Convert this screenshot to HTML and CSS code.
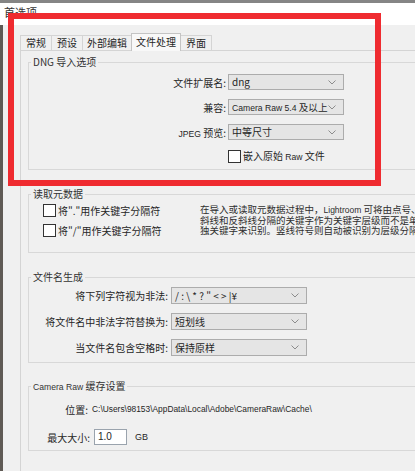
FILE: index.html
```html
<!DOCTYPE html>
<html lang="zh-CN">
<head>
<meta charset="utf-8">
<title>首选项</title>
<link rel="stylesheet" href="styles.css">
</head>
<body>
<div class="screen">
  <div class="titlebar">首选项</div>
  <div class="main">
    <div class="tabs">
      <div class="tab">常规</div>
      <div class="tab">预设</div>
      <div class="tab wide">外部编辑</div>
      <div class="tab wide active">文件处理</div>
      <div class="tab">界面</div>
    </div>
    <div class="panel">
      <fieldset class="group group-dng">
        <legend>DNG 导入选项</legend>
        <div class="frow">
          <span class="flabel">文件扩展名:</span>
          <div class="select">dng<svg class="chev" width="8" height="5" viewBox="0 0 8 5"><path d="M0.5 0.5 L4 4 L7.5 0.5" fill="none" stroke="#8c8c8c" stroke-width="1"/></svg></div>
        </div>
        <div class="frow">
          <span class="flabel">兼容:</span>
          <div class="select"><span class="latin">Camera Raw 5.4</span> <span class="cjk-sm">及以上</span><svg class="chev" width="8" height="5" viewBox="0 0 8 5"><path d="M0.5 0.5 L4 4 L7.5 0.5" fill="none" stroke="#8c8c8c" stroke-width="1"/></svg></div>
        </div>
        <div class="frow">
          <span class="flabel"><span class="latin">JPEG</span> 预览:</span>
          <div class="select">中等尺寸<svg class="chev" width="8" height="5" viewBox="0 0 8 5"><path d="M0.5 0.5 L4 4 L7.5 0.5" fill="none" stroke="#8c8c8c" stroke-width="1"/></svg></div>
        </div>
        <div class="frow frow-cb">
          <span></span>
          <label class="cb"><span class="box"></span><span>嵌入原始 <span class="latin">Raw</span> 文件</span></label>
        </div>
      </fieldset>

      <fieldset class="group group-meta">
        <legend>读取元数据</legend>
        <div class="meta">
          <div class="meta-left">
            <label class="cb"><span class="box"></span><span>将"."用作关键字分隔符</span></label>
            <label class="cb"><span class="box"></span><span>将"/"用作关键字分隔符</span></label>
          </div>
          <p class="meta-note">在导入或读取元数据过程中，<span class="latin">Lightroom</span> 可将由点号、<br>斜线和反斜线分隔的关键字作为关键字层级而不是单<br>独关键字来识别。竖线符号则自动被识别为层级分隔符。</p>
        </div>
      </fieldset>

      <fieldset class="group group-names">
        <legend>文件名生成</legend>
        <div class="nrow">
          <span class="flabel">将下列字符视为非法:</span>
          <div class="select">/ : \ * ? &quot; &lt; &gt; |¥<svg class="chev" width="8" height="5" viewBox="0 0 8 5"><path d="M0.5 0.5 L4 4 L7.5 0.5" fill="none" stroke="#8c8c8c" stroke-width="1"/></svg></div>
        </div>
        <div class="nrow">
          <span class="flabel">将文件名中非法字符替换为:</span>
          <div class="select">短划线<svg class="chev" width="8" height="5" viewBox="0 0 8 5"><path d="M0.5 0.5 L4 4 L7.5 0.5" fill="none" stroke="#8c8c8c" stroke-width="1"/></svg></div>
        </div>
        <div class="nrow">
          <span class="flabel">当文件名包含空格时:</span>
          <div class="select">保持原样<svg class="chev" width="8" height="5" viewBox="0 0 8 5"><path d="M0.5 0.5 L4 4 L7.5 0.5" fill="none" stroke="#8c8c8c" stroke-width="1"/></svg></div>
        </div>
      </fieldset>

      <fieldset class="group group-cache">
        <legend><span class="latin">Camera Raw</span> 缓存设置</legend>
        <div class="crow crow-loc">
          <span class="flabel">位置:</span>
          <span class="path">C:\Users\98153\AppData\Local\Adobe\CameraRaw\Cache\</span>
        </div>
        <div class="crow crow-size">
          <span class="flabel">最大大小:</span>
          <span class="input">1.0</span>
          <span class="unit">GB</span>
        </div>
      </fieldset>
    </div>
  </div>
  <div class="annotation"></div>
</div>
</body>
</html>
```

FILE: styles.css
```css
* { box-sizing: border-box; }

html, body {
  margin: 0;
  height: 471px;
  overflow: hidden;
}

body {
  background: #f0f0f0;
  font-family: "Noto Sans CJK SC", "Noto Sans", sans-serif;
  font-size: 10px;
  color: #262626;
}

.screen {
  position: relative;
  width: 480px;
  height: 471px;
}

.titlebar {
  height: 25px;
  background: #ffffff;
  border-top: 3px solid #858585;
  padding: 2px 0 0 4px;
  font-size: 11px;
  line-height: 14px;
  color: #333;
}

.main {
  height: 446px;
  border-left: 3px solid #5f5a55;
  padding: 8px 0 0 17px;
  overflow: hidden;
}

.tabs {
  display: flex;
  align-items: flex-end;
  height: 17px;
}

.tab {
  height: 15px;
  border: 1px solid #d4d4d4;
  border-bottom: none;
  padding: 0 5px;
  line-height: 13px;
  margin-left: -1px;
  background: #f0f0f0;
  white-space: nowrap;
}

.tab:first-child { margin-left: 0; }
.tab.wide { padding: 0 4px; }

.tab.active {
  position: relative;
  z-index: 1;
  height: 18px;
  margin-bottom: -1px;
  line-height: 15px;
  background: #f8f8f8;
  border-color: #c4c4c4;
}

.panel {
  border-top: 1px solid #d4d4d4;
  border-left: 1px solid #d4d4d4;
  height: 430px;
  padding-left: 7px;
  background: #f0f0f0;
}

.group {
  margin: 0;
  padding: 0;
  border: 1px solid #d8d8d8;
  min-width: 0;
}

.group legend {
  margin-left: 2px;
  padding: 0 2px;
  line-height: 12px;
  font-size: 10px;
  color: #333;
}

.latin {
  font-family: "Liberation Sans", Arial, sans-serif;
  font-size: 8.6px;
}

.cjk-sm { font-size: 9.6px; }

.group-dng { margin-top: 5px; padding: 6px 0 6px; }
.group-meta { margin-top: 18px; padding: 4px 0 15px; }
.group-names { margin-top: 18px; padding: 4px 0 6px; }
.group-cache { margin-top: 17px; padding: 10px 0 5px; }

.flabel {
  text-align: right;
  white-space: nowrap;
}

.frow {
  display: grid;
  grid-template-columns: 197px 116px;
  column-gap: 2px;
  align-items: center;
  height: 16px;
  margin-bottom: 9px;
}

.frow-cb {
  height: 14px;
  margin-bottom: 0;
}

.select {
  position: relative;
  height: 16px;
  background: #e5e5e5;
  border: 1px solid #acacac;
  padding-left: 3px;
  line-height: 14px;
  white-space: nowrap;
  overflow: hidden;
}

.chev {
  position: absolute;
  right: 7px;
  top: 5px;
}

.cb {
  display: flex;
  align-items: center;
  gap: 2px;
  white-space: nowrap;
  line-height: 13px;
}

.box {
  width: 13px;
  height: 13px;
  background: #ffffff;
  border: 1px solid #333;
  flex: none;
}

.meta {
  display: flex;
}

.meta-left {
  width: 171px;
  flex: none;
  padding-left: 14px;
  display: flex;
  flex-direction: column;
  gap: 7px;
}

.meta-note {
  margin: 0;
  font-size: 9.5px;
  line-height: 10.2px;
  white-space: nowrap;
  color: #2e2e2e;
}

.meta-note .latin { font-size: 8.5px; }

.nrow {
  display: grid;
  grid-template-columns: 139px 136px;
  column-gap: 3px;
  align-items: center;
  height: 17px;
  margin-bottom: 9px;
}

.nrow:last-child { margin-bottom: 0; }
.nrow .select { height: 17px; line-height: 15px; }

.crow {
  display: flex;
  align-items: center;
  gap: 4px;
}

.crow-loc {
  height: 12px;
  margin-bottom: 14px;
}

.crow-loc .flabel { width: 59px; }

.path {
  font-family: "Liberation Sans", Arial, sans-serif;
  font-size: 8.4px;
  white-space: nowrap;
}

.crow-size { height: 16px; }
.crow-size .flabel { width: 61px; }

.input {
  width: 33px;
  height: 16px;
  background: #ffffff;
  border: 1px solid #9aa3ad;
  padding-left: 3px;
  line-height: 14px;
  font-family: "Liberation Sans", Arial, sans-serif;
}

.unit {
  margin-left: 4px;
  font-family: "Liberation Sans", Arial, sans-serif;
  font-size: 9px;
}

.annotation {
  position: absolute;
  left: 8px;
  top: 13px;
  width: 373px;
  height: 173px;
  border: 6px solid #ef2b30;
}
```
